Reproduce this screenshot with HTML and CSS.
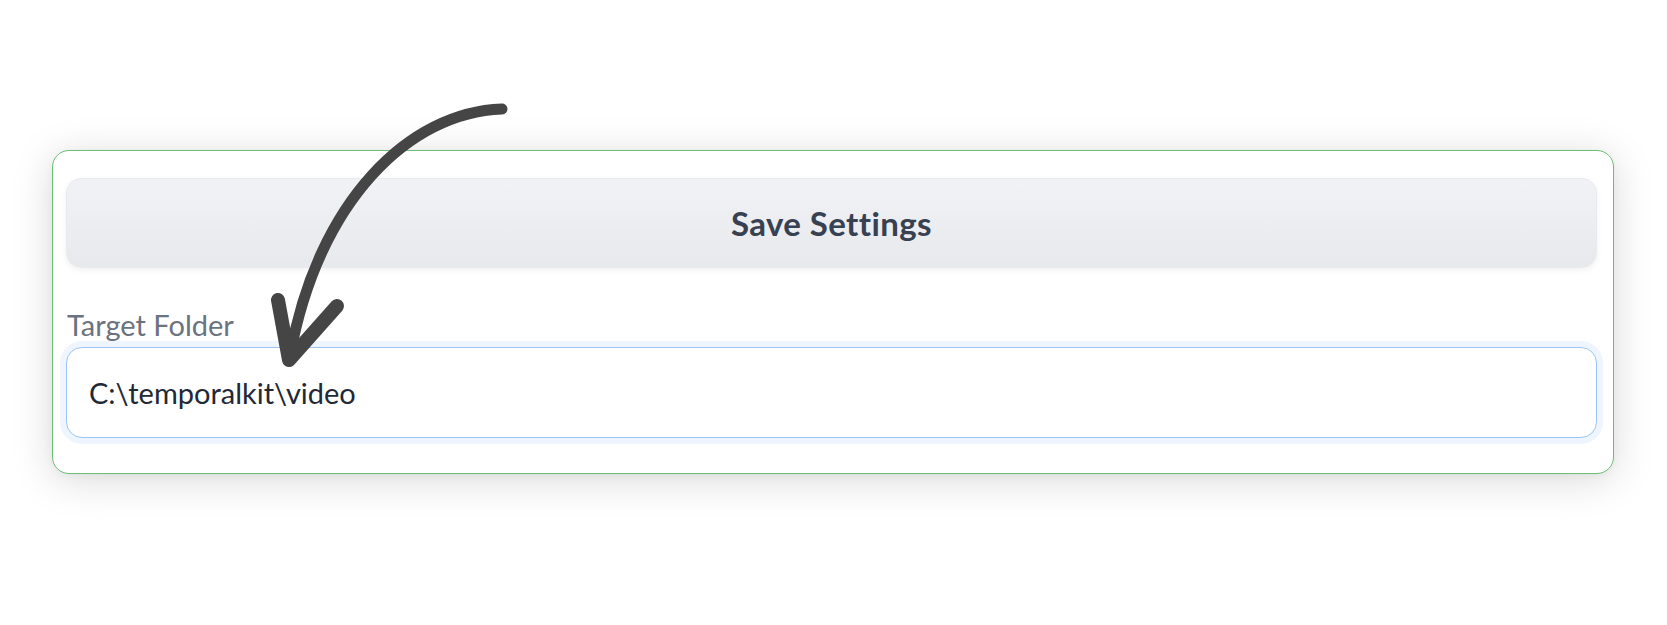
FILE: index.html
```html
<!DOCTYPE html>
<html lang="en">
<head>
<meta charset="utf-8">
<title>Save Settings</title>
<link rel="stylesheet" href="styles.css">
</head>
<body>
<main class="page">
  <section class="card">
    <button class="btn-save" type="button">Save Settings</button>
    <div class="field">
      <label class="field-label" for="target">Target Folder</label>
      <input id="target" class="field-input" type="text" value="C:\temporalkit\video">
    </div>
  </section>
</main>
<svg class="annotation" width="1667" height="625" viewBox="0 0 1667 625" aria-hidden="true">
  <path d="M502,109 C410,112 318,200 290,356" fill="none" stroke="#454545" stroke-width="11" stroke-linecap="round"/>
  <path d="M278,300 L289,360 L337,306" fill="none" stroke="#454545" stroke-width="14" stroke-linecap="round" stroke-linejoin="round"/>
</svg>
</body>
</html>
```

FILE: styles.css
```css
html, body {
  margin: 0;
  padding: 0;
  background: #ffffff;
}

body {
  width: 1667px;
  height: 625px;
  overflow: hidden;
  position: relative;
  font-family: "Lato", "Open Sans", "Liberation Sans", sans-serif;
}

.page {
  padding: 150px 0 0 52px;
}

.card {
  box-sizing: border-box;
  width: 1562px;
  height: 324px;
  border: 1.5px solid #6cbd76;
  border-radius: 17px;
  background: #ffffff;
  box-shadow: 0 6px 42px rgba(0, 0, 0, 0.15), 0 2px 10px rgba(0, 0, 0, 0.04);
  padding: 27px 16px 0 13px;
}

.btn-save {
  display: block;
  width: 100%;
  height: 90px;
  border: 1px solid #e9eaee;
  border-radius: 15px;
  background: linear-gradient(180deg, #f1f2f5 0%, #e8e9ed 100%);
  box-shadow: 0 2px 6px rgba(0, 0, 0, 0.06);
  color: #374151;
  font-family: inherit;
  font-size: 33px;
  font-weight: 700;
  letter-spacing: 0.4px;
  cursor: pointer;
  padding: 0;
}

.field {
  margin-top: 41px;
}

.field-label {
  display: block;
  color: #6b7280;
  font-size: 29px;
  line-height: 32px;
  margin-left: 1px;
  margin-bottom: 6px;
}

.field-input {
  box-sizing: border-box;
  display: block;
  width: 100%;
  height: 91px;
  border: 1.5px solid #9cc5f5;
  border-radius: 16px;
  box-shadow: 0 0 0 6px #eef5fe;
  background: #ffffff;
  padding: 0 22px;
  color: #222836;
  font-family: inherit;
  font-size: 29px;
  outline: none;
}

.annotation {
  position: absolute;
  top: 0;
  left: 0;
  pointer-events: none;
}
```
